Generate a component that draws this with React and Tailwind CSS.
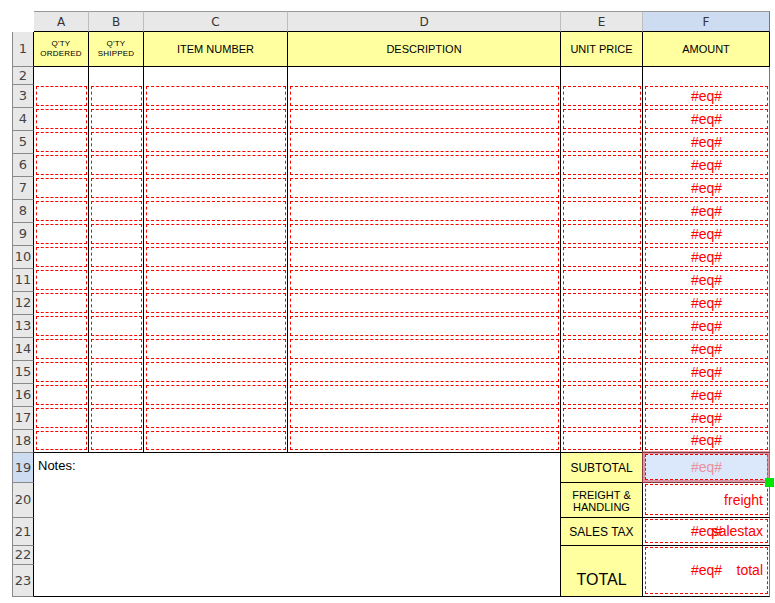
import React from "react";

const body = Array.from({ length: 16 }, (_, i) => i + 3);

function RowHead({ n, active }) {
  return (
    <div
      className={`flex items-center justify-center border-l border-b border-r border-l-[#8a8a8a] border-b-[#8a8a8a] border-r-black text-[13px] text-[#444] font-['DejaVu_Sans',sans-serif] ${
        active ? "bg-[#cddcf1]" : "bg-[#e8e8e8]"
      }`}
    >
      {n}
    </div>
  );
}

function ColHead({ label, active, last }) {
  return (
    <div
      className={`flex items-center justify-center border-t border-b border-r border-t-[#999] border-b-black text-[12px] text-[#333] font-['DejaVu_Sans',sans-serif] ${
        last ? "border-r-[#777]" : "border-r-[#bdbdbd]"
      } ${active ? "bg-[#cddcf1]" : "bg-[#e8e8e8]"}`}
    >
      {label}
    </div>
  );
}

function Dashed({ children, className = "" }) {
  return (
    <div className="h-full pl-[2px] pr-px pt-px pb-[2px]">
      <div
        className={`h-full border border-dashed border-[#ff0000] ${className}`}
      >
        {children}
      </div>
    </div>
  );
}

export default function App() {
  return (
    <div className="w-[775px] h-[603px] bg-white pl-[12px] pt-[11px] font-['Liberation_Sans',Arial,sans-serif] text-black">
      <div className="grid grid-cols-[22px_55px_55px_144px_273px_82px_127px] grid-rows-[21px_35px_18px_repeat(16,23px)_30px_35px_28px_19px_32px]">
        {/* column letters */}
        <div />
        <ColHead label="A" />
        <ColHead label="B" />
        <ColHead label="C" />
        <ColHead label="D" />
        <ColHead label="E" />
        <ColHead label="F" active last />

        {/* row 1: headings */}
        <RowHead n={1} />
        <div className="flex flex-col items-center justify-center bg-[#ffffa0] border-r border-b border-black text-[8px] leading-[10px] tracking-[0.2px]">
          <span>Q'TY</span>
          <span>ORDERED</span>
        </div>
        <div className="flex flex-col items-center justify-center bg-[#ffffa0] border-r border-b border-black text-[8px] leading-[10px] tracking-[0.2px]">
          <span>Q'TY</span>
          <span>SHIPPED</span>
        </div>
        <div className="flex items-center justify-center bg-[#ffffa0] border-r border-b border-black text-[11px]">
          ITEM NUMBER
        </div>
        <div className="flex items-center justify-center bg-[#ffffa0] border-r border-b border-black text-[11px]">
          DESCRIPTION
        </div>
        <div className="flex items-center justify-center bg-[#ffffa0] border-r border-b border-black text-[11px]">
          UNIT PRICE
        </div>
        <div className="flex items-center justify-center bg-[#ffffa0] border-r border-b border-black text-[11px]">
          AMOUNT
        </div>

        {/* row 2: blank */}
        <RowHead n={2} />
        <div className="border-r border-black" />
        <div className="border-r border-black" />
        <div className="border-r border-black" />
        <div className="border-r border-black" />
        <div className="border-r border-black" />
        <div className="border-r border-[#777]" />

        {/* rows 3 - 18 */}
        {body.map((n) => {
          const edge = n === 18 ? "border-b border-b-black" : "";
          return (
            <React.Fragment key={n}>
              <RowHead n={n} />
              <div className={`border-r border-r-black ${edge}`}>
                <Dashed />
              </div>
              <div className={`border-r border-r-black ${edge}`}>
                <Dashed />
              </div>
              <div className={`border-r border-r-black ${edge}`}>
                <Dashed />
              </div>
              <div className={`border-r border-r-black ${edge}`}>
                <Dashed />
              </div>
              <div className={`border-r border-r-black ${edge}`}>
                <Dashed />
              </div>
              <div className={`border-r border-r-[#777] ${edge}`}>
                <Dashed className="flex items-center justify-center text-[14px] text-[#ff0000]">
                  #eq#
                </Dashed>
              </div>
            </React.Fragment>
          );
        })}

        {/* row 19 */}
        <RowHead n={19} active />
        <div className="col-span-4 row-span-5 border-r border-b border-black pl-[4px] pt-[5px] text-[13px] leading-[15px]">
          Notes:
        </div>
        <div className="flex items-center justify-center bg-[#ffffa0] border-r border-b border-black text-[12px]">
          SUBTOTAL
        </div>
        <div className="relative bg-[#dbe7fa] border-r border-b border-r-[#777] border-b-black">
          <Dashed className="flex items-center justify-center text-[14px] text-[#e9909c] border-[#ef6f78]">
            #eq#
          </Dashed>
          <div className="absolute -top-[2px] -left-px -right-px -bottom-px border-[3px] border-[#d9606a]/60" />
          <div className="absolute -right-[5px] -bottom-[5px] w-[9px] h-[9px] bg-[#00e600]" />
        </div>

        {/* row 20 */}
        <RowHead n={20} />
        <div className="flex flex-col items-center justify-center bg-[#ffffa0] border-r border-b border-black text-[11px] leading-[12px] pt-px">
          <span>FREIGHT &amp;</span>
          <span>HANDLING</span>
        </div>
        <div className="border-r border-b border-r-[#777] border-b-black">
          <Dashed className="flex items-center justify-end pr-[4px] pt-[2px] text-[14px] text-[#ff0000]">
            freight
          </Dashed>
        </div>

        {/* row 21 */}
        <RowHead n={21} />
        <div className="flex items-center justify-center bg-[#ffffa0] border-r border-b border-black text-[12px]">
          SALES TAX
        </div>
        <div className="border-r border-b border-r-[#777] border-b-black">
          <Dashed className="grid items-center pr-[4px] text-[14px] text-[#ff0000]">
            <span className="col-start-1 row-start-1 justify-self-center pl-[4px]">#eq#</span>
            <span className="col-start-1 row-start-1 justify-self-end">salestax</span>
          </Dashed>
        </div>

        {/* rows 22 - 23 */}
        <RowHead n={22} />
        <div className="row-span-2 flex items-center justify-center bg-[#ffffa0] border-r border-b border-black text-[16px] pt-[17px]">
          TOTAL
        </div>
        <div className="row-span-2 border-r border-b border-r-[#777] border-b-black">
          <Dashed className="grid items-center pr-[4px] text-[14px] text-[#ff0000]">
            <span className="col-start-1 row-start-1 justify-self-center pl-[4px]">#eq#</span>
            <span className="col-start-1 row-start-1 justify-self-end">total</span>
          </Dashed>
        </div>
        <RowHead n={23} />
      </div>
    </div>
  );
}
